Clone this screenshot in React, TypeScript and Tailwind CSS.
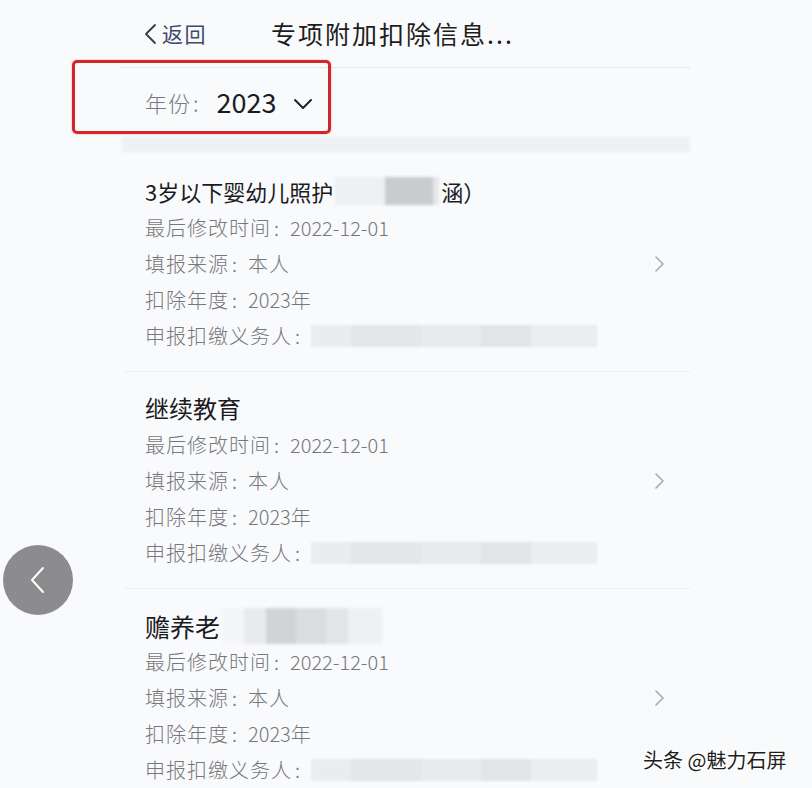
const FONT = "font-['Noto_Sans_CJK_SC','Noto_Sans',sans-serif]";

interface Item {
  title: React.ReactNode;
  size: string;
  modified: string;
  source: string;
  year: string;
}

function BlurBar() {
  return (
    <div className="flex h-[22px] w-[286px] overflow-hidden blur-[1px]">
      <div className="w-[40px] bg-[#eaecf0]" />
      <div className="w-[70px] bg-[#e4e6ea]" />
      <div className="w-[60px] bg-[#e8eaee]" />
      <div className="w-[50px] bg-[#e2e4e8]" />
      <div className="flex-1 bg-[#ebedf1]" />
    </div>
  );
}

function ChevronRight() {
  return (
    <svg width="12" height="18" viewBox="0 0 12 18" fill="none">
      <path d="M2 2 L9 9 L2 16" stroke="#a9abb0" strokeWidth="1.6" strokeLinecap="round" strokeLinejoin="round" />
    </svg>
  );
}

function Label({ text }: { text: string }) {
  return (
    <span className="inline-flex">
      <span className="tracking-[1px]">{text}</span>
      <span className="inline-block w-[19px] pl-[3px]">:</span>
    </span>
  );
}

function Card({ item, first, last }: { item: Item; first?: boolean; last?: boolean }) {
  return (
    <div
      className={`ml-[125px] w-[565px] ${last ? "" : "border-b border-[#eceef2]"} ${first ? "pt-[22px]" : "pt-[19px]"} ${last ? "pb-[17px]" : "pb-[17px]"}`}
    >
      <div className="flex items-center">
        <div className="flex-1 pl-[20px]">
          <div className={`h-[34px] ${item.size} leading-[34px] text-[#1b1b1f]`}>{item.title}</div>
          <div className="mt-[2px] text-[20px] font-light leading-[36px] text-[#76777b]">
            <div className="flex items-center">
              <Label text="最后修改时间" />
              <span>{item.modified}</span>
            </div>
            <div className="flex items-center">
              <Label text="填报来源" />
              <span className="tracking-[1px]">{item.source}</span>
            </div>
            <div className="flex items-center">
              <Label text="扣除年度" />
              <span>{item.year}</span>
            </div>
            <div className="flex items-center">
              <Label text="申报扣缴义务人" />
              <BlurBar />
            </div>
          </div>
        </div>
        <div className="mr-[24px]">
          <ChevronRight />
        </div>
      </div>
    </div>
  );
}

const items: Item[] = [
  {
    title: (
      <span className="flex items-center">
        3岁以下婴幼儿照护
        <span className="mx-[2px] flex h-[28px] w-[104px] blur-[1.5px]">
          <span className="w-[50px] bg-[#eef0f3]" />
          <span className="w-[48px] bg-[#cacbcf]" />
          <span className="w-[6px] bg-[#e6e7ea]" />
        </span>
        涵）
      </span>
    ),
    size: "text-[22px]",
    modified: "2022-12-01",
    source: "本人",
    year: "2023年",
  },
  { title: "继续教育", size: "text-[24px]", modified: "2022-12-01", source: "本人", year: "2023年" },
  {
    title: (
      <span className="flex items-center">
        赡养老
        <span className="ml-[2px] flex h-[36px] w-[160px] blur-[1.5px]">
          <span className="w-[22px] bg-[#f4f5f7]" />
          <span className="w-[22px] bg-[#e9eaed]" />
          <span className="w-[30px] bg-[#d2d3d6]" />
          <span className="w-[30px] bg-[#dbdcdf]" />
          <span className="w-[22px] bg-[#e3e4e7]" />
          <span className="w-[34px] bg-[#eff0f2]" />
        </span>
      </span>
    ),
    size: "text-[25px]",
    modified: "2022-12-01",
    source: "本人",
    year: "2023年",
  },
];

export default function App() {
  return (
    <div className={`relative h-[788px] w-[812px] overflow-hidden bg-[#f9fafc] ${FONT}`}>
      {/* header */}
      <div className="flex h-[67px] items-center">
        <div className="ml-[143px] flex items-center text-[21px] tracking-[1.5px] text-[#3f4b6b]">
          <svg width="14" height="22" viewBox="0 0 14 22" fill="none">
            <path d="M12 2 L3 11 L12 20" stroke="#333a4a" strokeWidth="1.8" strokeLinecap="round" strokeLinejoin="round" />
          </svg>
          <span className="ml-[5px]">返回</span>
        </div>
        <div className="ml-[64px] text-[25px] tracking-[2px] text-[#1d1d21]">专项附加扣除信息...</div>
      </div>

      {/* year picker */}
      <div className="relative ml-[120px] h-[70px] w-[570px] border-t border-[#e6e8ec]">
        <div className="flex h-full items-center pl-[25px]">
          <span className="text-[22px] font-light tracking-[1px] text-[#7a7b80]">年份</span>
          <span className="ml-[2px] text-[22px] font-light text-[#7a7b80]">:</span>
          <span className="ml-[18px] text-[27px] text-[#1b1b1f]">2023</span>
          <svg className="ml-[17px] mt-[2px]" width="20" height="12" viewBox="0 0 20 12" fill="none">
            <path d="M2 2 L10 10 L18 2" stroke="#222" strokeWidth="2" strokeLinecap="round" strokeLinejoin="round" />
          </svg>
        </div>
      </div>
      <div className="absolute left-[72px] top-[60px] h-[74px] w-[259px] rounded-[5px] border-[3px] border-[#d3262a] shadow-[0_0_2px_rgba(211,38,42,0.4)]" />

      {/* gray band */}
      <div className="ml-[122px] h-[15px] w-[568px] bg-[#eef0f3] blur-[1px]" />

      {items.map((it, i) => (
        <Card key={i} item={it} first={i === 0} last={i === items.length - 1} />
      ))}

      {/* floating back button */}
      <div className="absolute left-[3px] top-[545px] flex h-[70px] w-[70px] items-center justify-center rounded-full bg-[#8c8c8e]">
        <svg width="20" height="30" viewBox="0 0 20 30" fill="none">
          <path d="M15 3 L4 15 L15 27" stroke="#fff" strokeWidth="2" strokeLinecap="round" strokeLinejoin="round" />
        </svg>
      </div>

      {/* watermark */}
      <div className="absolute left-[643px] top-[745px] text-[20px] text-[#1e1e1e] [text-shadow:1px_1px_0_#fff,-1px_-1px_0_#fff,1px_-1px_0_#fff,-1px_1px_0_#fff]">
        头条 @魅力石屏
      </div>
    </div>
  );
}
